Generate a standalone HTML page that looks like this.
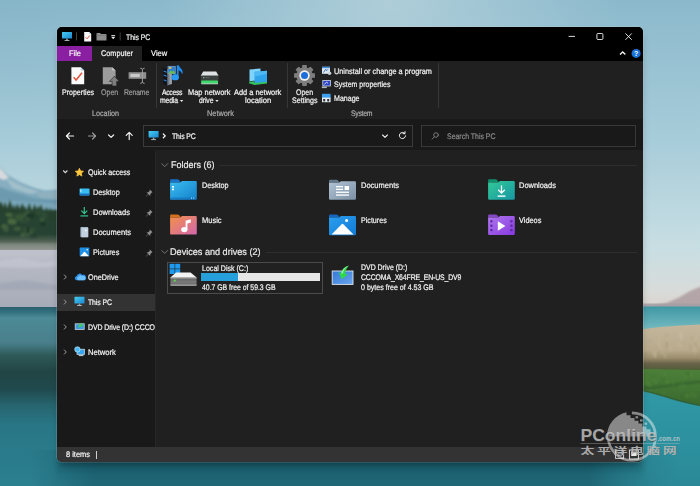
<!DOCTYPE html>
<html lang="en">
<head>
<meta charset="utf-8">
<title>This PC</title>
<style>
*{box-sizing:border-box;margin:0;padding:0}
html,body{width:700px;height:486px;overflow:hidden;background:#8db7c6}
body{position:relative;font-family:"Liberation Sans","Noto Sans CJK SC",sans-serif;color:#fff;font-size:8px;line-height:1}
#bg{position:absolute;left:0;top:0;width:700px;height:486px}
#win{position:absolute;left:57px;top:27px;width:586px;height:435px;border-radius:5px;overflow:hidden;background:#202020;box-shadow:0 5px 9px -3px rgba(0,0,0,.4),0 0 0 .6px rgba(205,220,226,.4)}
.abs{position:absolute}
.t{position:absolute;display:block;white-space:nowrap;line-height:10px;height:10px;transform-origin:0 50%;color:#f6f6f6;-webkit-text-stroke:.2px currentColor;text-rendering:geometricPrecision}
#titlebar{left:0;top:0;width:586px;height:34px;background:#000}
#tab-file{left:0;top:19px;width:35px;height:15px;background:#8b1fa2}
#tab-computer{left:35px;top:19px;width:50px;height:15px;background:#202020}
#ribbon{left:0;top:34px;width:586px;height:58px;background:#202020}
.vsep{position:absolute;width:1px;top:36px;height:45px;background:#373737}
#addr{left:0;top:92px;width:586px;height:31px;background:#191919}
#addrbox{left:86px;top:98px;width:270px;height:21.5px;border:1px solid #3b3b3b;background:#191919}
#searchbox{left:364px;top:98px;width:215px;height:21.5px;border:1px solid #383838;background:#191919}
#nav{left:0;top:123px;width:98px;height:297px;background:#191919;overflow:hidden}
#navsel{left:0;top:143.5px;width:98px;height:17px;background:#333}
#content{left:98px;top:126px;width:488px;height:294px;background:#202020;border-left:1px solid #272727}
.hline{position:absolute;height:1px;background:#2e2e2e}
#tile-c{left:109.5px;top:234.5px;width:156.5px;height:32px;border:1px solid #4b4b4b;background:#212121}
#bar{left:144.4px;top:246px;width:118.4px;height:8.2px;background:#e6e6e6}
#barfill{left:0;top:0;width:36.6px;height:8.2px;background:#26a0da}
#status{left:0;top:420px;width:586px;height:15px;background:#333}
#icons{position:absolute;left:0;top:0;width:586px;height:435px}
.t.g{color:#adadad}
.t.dis{color:#9c9c9c}
.t.sg{color:#8c8c8c}
.t.h{color:#ececec}
#wm{position:absolute;left:0;top:0;width:700px;height:486px;pointer-events:none}
</style>
</head>
<body>
<svg id="bg" viewBox="0 0 700 486">
<defs>
<linearGradient id="sky" x1="0" y1="0" x2="0" y2="1">
<stop offset="0" stop-color="#8bb9cc"/><stop offset="0.45" stop-color="#a7ccd9"/><stop offset="0.8" stop-color="#c8dee3"/><stop offset="0.93" stop-color="#d7dcda"/><stop offset="1" stop-color="#ddd3cd"/>
</linearGradient>
<radialGradient id="skyglow" cx="390" cy="-10" r="230" gradientUnits="userSpaceOnUse">
<stop offset="0" stop-color="#b3d0da" stop-opacity=".9"/><stop offset="1" stop-color="#b3d0da" stop-opacity="0"/>
</radialGradient>
<radialGradient id="lskyh" cx="0" cy="0" r="150" gradientUnits="userSpaceOnUse">
<stop offset="0" stop-color="#7eaec1" stop-opacity=".3"/><stop offset="1" stop-color="#7eaec1" stop-opacity="0"/>
</radialGradient>
<linearGradient id="mtn" x1="0" y1="0" x2="0" y2="1">
<stop offset="0" stop-color="#c3d3da"/><stop offset="0.3" stop-color="#8ab1c2"/><stop offset="1" stop-color="#76a3b7"/>
</linearGradient>
<linearGradient id="mist" x1="0" y1="0" x2="0" y2="1">
<stop offset="0" stop-color="#5f6f60" stop-opacity="0"/><stop offset="0.6" stop-color="#777f74" stop-opacity=".9"/><stop offset="1" stop-color="#9a9d9a"/>
</linearGradient>
<linearGradient id="snow" x1="0" y1="0" x2="0" y2="1">
<stop offset="0" stop-color="#c0c3cd"/><stop offset="0.3" stop-color="#b4b8c3"/><stop offset="1" stop-color="#a6abb8"/>
</linearGradient>
<linearGradient id="lwater" x1="0" y1="0" x2="0" y2="1">
<stop offset="0" stop-color="#2a5e6d"/><stop offset="0.03" stop-color="#35717f"/><stop offset="0.06" stop-color="#4c8b97"/><stop offset="0.2" stop-color="#497f8b"/><stop offset="0.27" stop-color="#2e5a58"/><stop offset="0.36" stop-color="#214544"/><stop offset="0.46" stop-color="#204a4e"/><stop offset="0.55" stop-color="#27656f"/><stop offset="0.66" stop-color="#287686"/><stop offset="1" stop-color="#2b8090"/>
</linearGradient>
<linearGradient id="rwater" x1="0" y1="0" x2="0" y2="1">
<stop offset="0" stop-color="#3f98a5"/><stop offset="1" stop-color="#78bcc1"/>
</linearGradient>
<linearGradient id="dry" x1="0" y1="0" x2="0" y2="1">
<stop offset="0" stop-color="#c3b69c"/><stop offset="0.55" stop-color="#b9aa8c"/><stop offset="0.72" stop-color="#9b8d6d"/><stop offset="0.84" stop-color="#6a6349"/><stop offset="1" stop-color="#4c5c36"/>
</linearGradient>
<linearGradient id="green" x1="0" y1="0" x2="0" y2="1">
<stop offset="0" stop-color="#4c8039"/><stop offset="0.5" stop-color="#437534"/><stop offset="1" stop-color="#3a692f"/>
</linearGradient>
<linearGradient id="rbwater" x1="0" y1="0" x2="0" y2="1">
<stop offset="0" stop-color="#2f98a6"/><stop offset="0.5" stop-color="#2d919f"/><stop offset="1" stop-color="#2b8997"/>
</linearGradient>
<linearGradient id="bwater" x1="0" y1="0" x2="1" y2="0">
<stop offset="0" stop-color="#1f6676" stop-opacity="0"/><stop offset="0.1" stop-color="#1f6676" stop-opacity="1"/><stop offset="0.86" stop-color="#1f6676" stop-opacity="1"/><stop offset="1" stop-color="#2a7c8b" stop-opacity="0"/>
</linearGradient>
<linearGradient id="bshade" x1="0" y1="0" x2="0" y2="1">
<stop offset="0" stop-color="#0d3a46" stop-opacity=".3"/><stop offset="1" stop-color="#0d3a46" stop-opacity="0"/>
</linearGradient>
<filter id="b1" x="-20%" y="-20%" width="140%" height="140%"><feGaussianBlur stdDeviation=".8"/></filter>
<filter id="b2" x="-20%" y="-20%" width="140%" height="140%"><feGaussianBlur stdDeviation="2"/></filter>
</defs>
<rect width="700" height="310" fill="url(#sky)"/>
<rect width="700" height="240" fill="url(#skyglow)"/>
<rect width="160" height="160" fill="url(#lskyh)"/>
<!-- left landscape -->
<g id="left-land">
<path d="M-10 160L0 167L8 175L20 182L35 188L45 190.5L70 189L70 216L-10 216Z" fill="url(#mtn)" filter="url(#b1)"/>
<path d="M-6 166L2 170L9 178L4 180L-6 176Z" fill="#d6dadf" filter="url(#b1)"/>
<path d="M6 178L22 186L40 192L30 194L12 188Z" fill="#a9c4ce" opacity=".8" filter="url(#b1)"/>
<path d="M-4 186L14 192L34 198L60 200L60 204L-4 200Z" fill="#6896ab" opacity=".8" filter="url(#b1)"/>
<path d="M36 192L58 191L58 199L40 198Z" fill="#96b3bf" opacity=".7" filter="url(#b1)"/>
<g filter="url(#b1)">
<rect x="-10" y="210" width="80" height="34" fill="#284330"/>
<path d="M-2.4 198.4L1.8 209.4L-6.5 209.4Z" fill="#27432f"/><path d="M1.1 200.8L4.9 211.8L-2.6 211.8Z" fill="#27432f"/><path d="M5.1 201.3L8.4 212.3L1.9 212.3Z" fill="#27432f"/><path d="M9.9 199.7L13.2 210.7L6.5 210.7Z" fill="#27432f"/><path d="M13.8 204.1L17.2 215.1L10.5 215.1Z" fill="#27432f"/><path d="M17.4 203.6L22 214.6L12.9 214.6Z" fill="#27432f"/><path d="M22.2 203.1L26.7 214.1L17.6 214.1Z" fill="#27432f"/><path d="M25.1 205.8L28.7 216.8L21.5 216.8Z" fill="#27432f"/><path d="M29.3 202.7L32.9 213.7L25.7 213.7Z" fill="#27432f"/><path d="M34.6 203.8L38.6 214.8L30.6 214.8Z" fill="#27432f"/><path d="M38.3 205.2L42.2 216.2L34.3 216.2Z" fill="#27432f"/><path d="M41.1 204.1L44.6 215.1L37.6 215.1Z" fill="#27432f"/><path d="M46.4 206.6L50 217.6L42.7 217.6Z" fill="#27432f"/><path d="M50.2 207.3L53.8 218.3L46.6 218.3Z" fill="#27432f"/><path d="M54.6 209.2L58.1 220.2L51 220.2Z" fill="#27432f"/><path d="M58.1 208.8L62.6 219.8L53.7 219.8Z" fill="#27432f"/>
<ellipse cx="42.3" cy="219.5" rx="2.3" ry="2.3" fill="#3d5c3c"/><ellipse cx="43.9" cy="216" rx="3.1" ry="3.4" fill="#2f4c35"/><ellipse cx="4.5" cy="226.5" rx="2.9" ry="2.2" fill="#48683f"/><ellipse cx="28.8" cy="232.7" rx="4.1" ry="3.4" fill="#3d5c3c"/><ellipse cx="27.5" cy="229.3" rx="3.8" ry="2.1" fill="#3d5c3c"/><ellipse cx="33.5" cy="229.7" rx="2.7" ry="2.3" fill="#2f4c35"/><ellipse cx="38.8" cy="212.6" rx="2.9" ry="2.7" fill="#2f4c35"/><ellipse cx="28.6" cy="217.7" rx="2.3" ry="2" fill="#48683f"/><ellipse cx="22.7" cy="234.7" rx="2.4" ry="2.3" fill="#3d5c3c"/><ellipse cx="16.1" cy="215.6" rx="4.2" ry="2.1" fill="#2f4c35"/><ellipse cx="24.1" cy="221.3" rx="4.4" ry="1.8" fill="#2f4c35"/><ellipse cx="10.2" cy="218" rx="2" ry="3.2" fill="#355435"/><ellipse cx="10.6" cy="219.3" rx="3" ry="2.2" fill="#355435"/><ellipse cx="32.8" cy="236.8" rx="4.4" ry="2.8" fill="#1f3829"/><ellipse cx="42.9" cy="223.9" rx="3" ry="2.3" fill="#1f3829"/><ellipse cx="6" cy="228.5" rx="2.5" ry="3.5" fill="#3d5c3c"/><ellipse cx="25.6" cy="214.9" rx="2.1" ry="1.5" fill="#1f3829"/><ellipse cx="8.8" cy="214.6" rx="3.5" ry="1.6" fill="#48683f"/><ellipse cx="12.1" cy="221.8" rx="4.4" ry="2.7" fill="#48683f"/><ellipse cx="27.5" cy="215" rx="4.5" ry="2.4" fill="#2f4c35"/><ellipse cx="28.1" cy="214.2" rx="3.9" ry="3" fill="#3d5c3c"/><ellipse cx="27.8" cy="230" rx="2.1" ry="3.4" fill="#1f3829"/><ellipse cx="30.6" cy="215.8" rx="4.3" ry="3" fill="#1f3829"/><ellipse cx="17.3" cy="228.7" rx="3.7" ry="2" fill="#3d5c3c"/><ellipse cx="21.3" cy="216.3" rx="3.3" ry="3.1" fill="#355435"/><ellipse cx="19.1" cy="217.8" rx="4" ry="3.1" fill="#355435"/>
</g>
<rect x="-10" y="234" width="80" height="18" fill="url(#mist)"/>
<rect x="-10" y="250" width="80" height="59" fill="url(#snow)"/>
<path d="M-5 262L20 258L44 263L62 259L62 266L30 268L-5 267Z" fill="#c4c7d0" opacity=".7" filter="url(#b1)"/>
<path d="M-5 284L24 280L62 286L62 290L-5 290Z" fill="#9da3b1" opacity=".6" filter="url(#b1)"/>
<rect x="0" y="307" width="350" height="179" fill="url(#lwater)"/>
</g>
<!-- right landscape -->
<g id="right-land">
<rect x="350" y="400" width="350" height="86" fill="url(#rbwater)"/>
<path d="M636 306.5L654 305.5L666 303L678 298L690 291L704 285L704 310L636 310Z" fill="#b4a6a8" filter="url(#b1)"/>
<rect x="640" y="303.5" width="60" height="4" fill="#a39fa5" opacity=".85"/>
<rect x="640" y="306.5" width="60" height="24" fill="url(#rwater)"/>
<path d="M640 329.5L660 327L680 325.5L700 324.5L700 371L640 370Z" fill="url(#dry)"/>
<path d="M640 369L700 370L700 406Q680 402 665 397Q650 392.5 640 390.5Z" fill="url(#green)"/>
<path d="M640 390.5Q650 392.5 665 397Q680 402 700 406L700 486L640 486Z" fill="url(#rbwater)"/>
<path d="M640 388.5Q655 388 670 385.5Q686 383 702 381.5" fill="none" stroke="#27502a" stroke-width="2.2" opacity=".55" filter="url(#b1)"/>
<g id="grass-tex" filter="url(#b1)"><path d="M656.6 344.1l0.2 4.5" stroke="#9d8f70" stroke-width="1" opacity=".55"/><path d="M646.7 330.3l0.1 6.3" stroke="#cdbf9f" stroke-width="1" opacity=".55"/><path d="M653.9 348.6l-0.2 5.2" stroke="#9d8f70" stroke-width="1" opacity=".55"/><path d="M692.1 336l0.4 3.6" stroke="#9d8f70" stroke-width="1" opacity=".55"/><path d="M681.3 331.7l-0.3 6" stroke="#d3c8b0" stroke-width="1" opacity=".55"/><path d="M644.8 352.5l0.3 4.9" stroke="#9d8f70" stroke-width="1" opacity=".55"/><path d="M695.5 340.3l0.7 6.2" stroke="#9d8f70" stroke-width="1" opacity=".55"/><path d="M650.6 339.5l-0.5 3.1" stroke="#9d8f70" stroke-width="1" opacity=".55"/><path d="M698 341.3l-0.1 5.5" stroke="#cdbf9f" stroke-width="1" opacity=".55"/><path d="M690.5 344.9l0.1 5.1" stroke="#9d8f70" stroke-width="1" opacity=".55"/><path d="M694.5 347.7l0.8 6.7" stroke="#cdbf9f" stroke-width="1" opacity=".55"/><path d="M681.3 334.2l0.3 6.4" stroke="#d3c8b0" stroke-width="1" opacity=".55"/><path d="M655 351.6l-0.6 5.3" stroke="#cdbf9f" stroke-width="1" opacity=".55"/><path d="M670.5 346.6l0.5 4.9" stroke="#cdbf9f" stroke-width="1" opacity=".55"/><path d="M666.4 333.9l0.6 4.2" stroke="#9d8f70" stroke-width="1" opacity=".55"/><path d="M645.5 346l0.1 3.2" stroke="#cdbf9f" stroke-width="1" opacity=".55"/><path d="M695.5 337.3l-0.3 3.9" stroke="#d3c8b0" stroke-width="1" opacity=".55"/><path d="M647.4 345.6l0.8 3.1" stroke="#a89a7c" stroke-width="1" opacity=".55"/><path d="M659.6 336.8l-0.3 5.8" stroke="#cdbf9f" stroke-width="1" opacity=".55"/><path d="M697.6 353.3l0.6 4.5" stroke="#9d8f70" stroke-width="1" opacity=".55"/><path d="M665 352.5l0.2 5.7" stroke="#d3c8b0" stroke-width="1" opacity=".55"/><path d="M696.6 343.2l0.7 4.7" stroke="#a89a7c" stroke-width="1" opacity=".55"/><path d="M667.9 336.7l-0.8 4.2" stroke="#cdbf9f" stroke-width="1" opacity=".55"/><path d="M666.7 345.1l-0.7 3.1" stroke="#a89a7c" stroke-width="1" opacity=".55"/><path d="M678.8 342.1l0.2 5.7" stroke="#cdbf9f" stroke-width="1" opacity=".55"/><path d="M658.9 342.7l0.7 5.4" stroke="#d3c8b0" stroke-width="1" opacity=".55"/><path d="M657.3 341.9l-0.5 5.4" stroke="#cdbf9f" stroke-width="1" opacity=".55"/><path d="M653.6 349.7l-0.3 6.4" stroke="#cdbf9f" stroke-width="1" opacity=".55"/><path d="M664.5 350.1l-0.3 3.1" stroke="#a89a7c" stroke-width="1" opacity=".55"/><path d="M655.7 350.9l0.3 4" stroke="#a89a7c" stroke-width="1" opacity=".55"/><path d="M680 332.5l0.3 5.4" stroke="#cdbf9f" stroke-width="1" opacity=".55"/><path d="M655.8 351.1l-0.3 6.8" stroke="#d3c8b0" stroke-width="1" opacity=".55"/><path d="M680.1 353l0.5 4.8" stroke="#a89a7c" stroke-width="1" opacity=".55"/><path d="M644.9 354.9l0.6 4.3" stroke="#a89a7c" stroke-width="1" opacity=".55"/><path d="M662.4 351.5l0.1 3.3" stroke="#cdbf9f" stroke-width="1" opacity=".55"/><path d="M667 343.5l-0.2 6.4" stroke="#9d8f70" stroke-width="1" opacity=".55"/><path d="M666.8 340.9l-0.6 4.6" stroke="#9d8f70" stroke-width="1" opacity=".55"/><path d="M643.3 354.5l0.1 6.5" stroke="#9d8f70" stroke-width="1" opacity=".55"/><path d="M699.2 348.6l0.5 3.1" stroke="#9d8f70" stroke-width="1" opacity=".55"/><path d="M680.8 343.5l0.6 4.2" stroke="#cdbf9f" stroke-width="1" opacity=".55"/><path d="M692.1 392.4l0.4 4.9" stroke="#5f9646" stroke-width="1" opacity=".5"/><path d="M695.7 393.4l-0.6 4.7" stroke="#5f9646" stroke-width="1" opacity=".5"/><path d="M685.5 375.3l0 3.2" stroke="#5f9646" stroke-width="1" opacity=".5"/><path d="M662.5 377.3l0.4 4.7" stroke="#2f5a28" stroke-width="1" opacity=".5"/><path d="M646.5 376.5l-0.4 2.8" stroke="#5f9646" stroke-width="1" opacity=".5"/><path d="M688.1 394l-0 4.5" stroke="#5f9646" stroke-width="1" opacity=".5"/><path d="M675.5 381l-0.3 4.4" stroke="#3c6a2e" stroke-width="1" opacity=".5"/><path d="M673.1 381.6l0.4 3.7" stroke="#5f9646" stroke-width="1" opacity=".5"/><path d="M687.2 372.2l0.6 2.6" stroke="#2f5a28" stroke-width="1" opacity=".5"/><path d="M691.7 373.2l-0.4 3.8" stroke="#6aa04c" stroke-width="1" opacity=".5"/><path d="M647.1 380.6l-0.2 3.5" stroke="#6aa04c" stroke-width="1" opacity=".5"/><path d="M653.9 379.2l0.3 2.8" stroke="#5f9646" stroke-width="1" opacity=".5"/><path d="M664.7 373l-0 2.9" stroke="#6aa04c" stroke-width="1" opacity=".5"/><path d="M680.1 384.5l0.1 4.1" stroke="#5f9646" stroke-width="1" opacity=".5"/><path d="M667.6 380.3l-0.1 3.7" stroke="#6aa04c" stroke-width="1" opacity=".5"/><path d="M682.6 382.5l0.2 3.1" stroke="#6aa04c" stroke-width="1" opacity=".5"/><path d="M647.1 381.6l0.5 3.6" stroke="#5f9646" stroke-width="1" opacity=".5"/><path d="M657.9 382.6l0.2 2.8" stroke="#2f5a28" stroke-width="1" opacity=".5"/><path d="M684.8 385.1l-0 2.8" stroke="#5f9646" stroke-width="1" opacity=".5"/><path d="M656.5 380.7l0.2 3.8" stroke="#5f9646" stroke-width="1" opacity=".5"/><path d="M664.4 391.5l-0.6 3.4" stroke="#5f9646" stroke-width="1" opacity=".5"/><path d="M649.6 383l0.1 4.2" stroke="#6aa04c" stroke-width="1" opacity=".5"/><path d="M688.5 371.9l-0.5 4.4" stroke="#3c6a2e" stroke-width="1" opacity=".5"/><path d="M685.7 394.4l0.4 2.7" stroke="#6aa04c" stroke-width="1" opacity=".5"/><path d="M653.3 372.9l-0.1 5" stroke="#3c6a2e" stroke-width="1" opacity=".5"/><path d="M682.9 394.6l0.5 3.1" stroke="#2f5a28" stroke-width="1" opacity=".5"/><path d="M674.7 395.2l0.6 3.4" stroke="#3c6a2e" stroke-width="1" opacity=".5"/></g>
<path d="M640 390Q650 392 665 396.5Q680 401.5 700 405.5" fill="none" stroke="#2c5a35" stroke-width="1.5" opacity=".7"/>
</g>
<!-- bottom water -->
<rect x="30" y="450" width="650" height="36" fill="url(#bwater)"/>
<rect x="57" y="460" width="586" height="20" fill="url(#bshade)" filter="url(#b2)"/>
</svg>
<div id="win">
  <div id="titlebar" class="abs"></div>
  <div id="tab-file" class="abs"></div>
  <div id="tab-computer" class="abs"></div>
  <div id="ribbon" class="abs"></div>
  <div class="vsep" style="left:98.5px"></div>
  <div class="vsep" style="left:230px"></div>
  <div class="vsep" style="left:380.5px"></div>
  <div id="addr" class="abs"></div>
  <div id="addrbox" class="abs"></div>
  <div id="searchbox" class="abs"></div>
  <div id="nav" class="abs"><div id="navsel" class="abs"></div></div>
  <div id="content" class="abs"></div>
  <div class="hline" style="left:162px;top:137.5px;width:418px"></div>
  <div class="hline" style="left:209px;top:224.5px;width:371px"></div>
  <div id="tile-c" class="abs"></div>
  <div id="bar" class="abs"><div id="barfill" class="abs"></div></div>
  <div id="status" class="abs"></div>
  <div class="abs" style="left:39px;top:423.5px;width:1px;height:8px;background:#d0d0d0"></div>
  <svg id="icons" viewBox="57 27 586 435">
<defs>
<linearGradient id="gMon" x1="0" y1="0" x2="1" y2="1"><stop offset="0" stop-color="#45cdf3"/><stop offset="1" stop-color="#1a86cf"/></linearGradient>
<linearGradient id="gDesk" x1="0" y1="0" x2="1" y2="1"><stop offset="0" stop-color="#3bbdf0"/><stop offset="1" stop-color="#1380cb"/></linearGradient>
<linearGradient id="gDocs" x1="0" y1="0" x2="1" y2="1"><stop offset="0" stop-color="#b2c4d4"/><stop offset="1" stop-color="#7b90a6"/></linearGradient>
<linearGradient id="gDown" x1="0" y1="0" x2="1" y2="1"><stop offset="0" stop-color="#33c997"/><stop offset="1" stop-color="#1797a4"/></linearGradient>
<linearGradient id="gMusic" x1="0" y1="0" x2="1" y2="1"><stop offset="0" stop-color="#f4904a"/><stop offset="1" stop-color="#d266ad"/></linearGradient>
<linearGradient id="gPics" x1="0" y1="0" x2="1" y2="1"><stop offset="0" stop-color="#2a9ff0"/><stop offset="1" stop-color="#127ad4"/></linearGradient>
<linearGradient id="gVid" x1="0" y1="0" x2="1" y2="1"><stop offset="0" stop-color="#b077ee"/><stop offset="1" stop-color="#8639de"/></linearGradient>
<linearGradient id="gDrive" x1="0" y1="0" x2="0" y2="1"><stop offset="0" stop-color="#5d5d5d"/><stop offset="0.55" stop-color="#7b7b7b"/><stop offset="1" stop-color="#676767"/></linearGradient>
<linearGradient id="gDvd" x1="0" y1="0" x2="1" y2="1"><stop offset="0" stop-color="#3478d6"/><stop offset="1" stop-color="#6aa5ee"/></linearGradient>
<linearGradient id="gTower" x1="0" y1="0" x2="1" y2="0"><stop offset="0" stop-color="#5b6470"/><stop offset="1" stop-color="#b4bac2"/></linearGradient>
</defs>
<!-- ===== title bar icons ===== -->
<g id="ic-title">
  <rect x="62" y="32" width="10" height="6.6" rx=".6" fill="url(#gMon)"/>
  <rect x="66.2" y="38.6" width="1.6" height="1.6" fill="#8fa3ad"/>
  <rect x="64.6" y="40" width="4.8" height=".9" fill="#b7c4ca"/>
  <rect x="76.1" y="32.5" width=".9" height="8" fill="#4d4a3a"/>
  <path d="M84.2 32h5l2 2v7.5h-7z" fill="#fbfbfb"/>
  <path d="M89.2 32l2 2h-2z" fill="#b9d3ea"/>
  <path d="M85.6 37.3l1.4 1.5 2.9-3.4" fill="none" stroke="#e2553a" stroke-width="1"/>
  <path d="M96.5 33.6q0-.6.6-.6h3l1 1h4.8q.6 0 .6.6v5.3q0 .6-.6.6h-8.8q-.6 0-.6-.6z" fill="#8d8d8d"/>
  <rect x="96.5" y="35" width="10" height=".5" fill="#6f6f6f"/>
  <rect x="111.3" y="35" width="3.8" height=".9" fill="#e6e6e6"/>
  <path d="M111.1 36.7h4.2l-2.1 2.6z" fill="#e6e6e6"/>
  <rect x="119.7" y="32.5" width=".9" height="8" fill="#454545"/>
</g>
<!-- window buttons -->
<g id="ic-winbtn" stroke="#f2f2f2" stroke-width=".9" fill="none">
  <path d="M568.6 36.4h6.4"/>
  <rect x="596.9" y="33.5" width="6" height="6" rx="1"/>
  <path d="M625.4 33.4l6.4 6.4M631.8 33.4l-6.4 6.4"/>
  <path d="M620 54.4l2.7-2.5 2.7 2.5" stroke-width="1.3"/>
</g>
<circle cx="636.1" cy="53.4" r="4.5" fill="#1a73d9"/>
<text x="636.1" y="56" text-anchor="middle" font-family="'Liberation Sans',sans-serif" font-weight="bold" font-size="7" fill="#fff">?</text>
<!-- ===== ribbon icons ===== -->
<g id="ic-props">
  <path d="M71.4 67.2h9.4l3.4 3.4v13.7h-12.8z" fill="#fbfbfb"/>
  <path d="M80.8 67.2l3.4 3.4h-3.4z" fill="#b5d0e8"/>
  <path d="M73.6 77.3l2.5 2.7 5.9-7.2" fill="none" stroke="#e2553a" stroke-width="1.5"/>
</g>
<g id="ic-open">
  <path d="M102.8 67.2h9.4l3.4 3.4v13.7h-12.8z" fill="#9c9c9c"/>
  <path d="M112.2 67.2l3.4 3.4h-3.4z" fill="#c4c4c4"/>
  <path d="M114.4 76.2l5 5.2h-2.7v4.6h-4.6v-4.6h-2.7z" fill="#7d7d7d" stroke="#202020" stroke-width=".6"/>
</g>
<g id="ic-rename">
  <rect x="128.6" y="72.2" width="17.6" height="6.6" fill="#8e8e8e"/>
  <rect x="130.4" y="73.9" width="9.4" height="3.2" fill="#c9c9c9"/>
  <path d="M140.2 68.2q2 0 2.2 1.4q.2-1.4 2.2-1.4M142.4 69.4v12.8M140.2 83.4q2 0 2.2-1.4q.2 1.4 2.2 1.4" fill="none" stroke="#a6a6a6" stroke-width=".9"/>
</g>
<g id="ic-media">
  <path d="M163 67.6l5.4-2.4 3.4 1.2v17.6l-4.6 1.6-4.2-2.2z" fill="#1b2230"/>
  <path d="M163 67.6l4.2 1.6v16.4l-4.2-2.2z" fill="#0f141d"/>
  <path d="M167.2 69.2l4.6-2.8v17.6l-4.6 1.6z" fill="url(#gTower)"/>
  <path d="M163.6 70.4l3 1v1.4l-3-1zM163.6 74.4l3 1v1.4l-3-1zM163.6 79.4l3 .8v1.2l-3-.8z" fill="#2e7fd0"/>
  <rect x="168" y="66.2" width="7.4" height="7.6" fill="#2b7fd6" stroke="#9fb4c6" stroke-width=".5"/>
  <path d="M168.3 73.5l2.4-3.2 1.6 1.6 1.4-1.8 1.6 3.4z" fill="#6bbf4a"/>
  <rect x="169" y="67" width="2.4" height="1.8" fill="#f0c23c"/>
  <path d="M176.8 65.2l1.8 0q1 2.4 3.2 4.2q1.6 1.8.2 5q-.2-3-3.4-4.2v6.8a3.4 2.8 0 1 1-1.8-2.5z" fill="#1f8df0"/>
  <ellipse cx="175.2" cy="77.4" rx="3.7" ry="2.9" fill="#2a9af5"/>
</g>
<g id="ic-mapdrive">
  <path d="M203.2 71.4h13l2 3.8h-17.2z" fill="#dfe2e4"/>
  <rect x="200.8" y="75" width="17.6" height="9.2" rx="1" fill="#3a403d"/>
  <rect x="200.8" y="75" width="17.6" height=".8" fill="#a5abaf"/>
  <rect x="203" y="77.2" width="1.4" height="1" fill="#9fb0a6"/><rect x="205.4" y="77.2" width="4" height="1" fill="#59635d"/>
  <rect x="201.2" y="80.4" width="16.8" height="3" rx=".6" fill="#3fd96c"/>
  <rect x="201.2" y="83.4" width="16.8" height=".8" fill="#d5f5df"/>
</g>
<g id="ic-addnet">
  <path d="M249.5 69.5l11-1v11.5l-11 1.2z" fill="#7fd4fb"/>
  <path d="M254.5 71.8l12.5-1v12l-12.5 1.4z" fill="#2fa4ea"/>
  <path d="M254.5 71.8l12.5-1v3l-12.5 3z" fill="#55bdf5" opacity=".8"/>
  <path d="M249 81.8l5.5-.6v1.8l12.5-1.2v1.6l-12.5 1.6-5.5-1.7z" fill="#34c25e"/>
</g>
<g id="ic-gear">
  <path id="gearp" fill="#7e7e7e" stroke="#7e7e7e" stroke-width="1.2" stroke-linejoin="round" d="M314.35 73.78L314.35 77.22L311.89 77.27L310.98 79.47L312.68 81.25L310.25 83.68L308.47 81.98L306.27 82.89L306.22 85.35L302.78 85.35L302.73 82.89L300.53 81.98L298.75 83.68L296.32 81.25L298.02 79.47L297.11 77.27L294.65 77.22L294.65 73.78L297.11 73.73L298.02 71.53L296.32 69.75L298.75 67.32L300.53 69.02L302.73 68.11L302.78 65.65L306.22 65.65L306.27 68.11L308.47 69.02L310.25 67.32L312.68 69.75L310.98 71.53L311.89 73.73Z"/>
  <circle cx="304.5" cy="75.5" r="5.2" fill="#f1f1f1"/>
  <circle cx="304.5" cy="75.5" r="3.5" fill="#1c6fd8"/>
</g>
<g id="ic-small">
  <rect x="322" y="66.8" width="8" height="7" fill="#dfe9f2"/>
  <rect x="322" y="66.8" width="8" height="1.4" fill="#3d8fe0"/>
  <path d="M323.5 72.5l2-3 1.5 1 1-1.2" stroke="#2a62b5" stroke-width=".9" fill="none"/>
  <circle cx="329.5" cy="73.2" r="1.8" fill="#c9d3dc"/>
  <rect x="322.8" y="80.4" width="7.8" height="5.6" fill="#2d43c8" stroke="#cfd8e2" stroke-width=".8"/>
  <path d="M324.3 84.5l2.2-2.4 1.6 1.2" stroke="#fff" stroke-width=".8" fill="none"/>
  <rect x="321.8" y="86.6" width="5" height="1.5" fill="#aeb8c2"/>
  <rect x="322" y="93.8" width="8.6" height="4.4" fill="#3ba0ef"/>
  <rect x="322" y="97.6" width="8.6" height="4.6" fill="#e8edf1"/>
  <rect x="323.2" y="99" width="2" height="2.4" fill="#2a2f36"/>
  <rect x="327.2" y="99" width="2" height="2.4" fill="#2a2f36"/>
</g>
<!-- ribbon dropdown arrows -->
<path d="M179.9 100l3.4 0-1.7 1.9z" fill="#e6e6e6"/>
<path d="M215.3 100l3.4 0-1.7 1.9z" fill="#e6e6e6"/>
<!-- ===== address row ===== -->
<g id="ic-addr" fill="none" stroke="#f2f2f2" stroke-width="1.2" stroke-linecap="round" stroke-linejoin="round">
  <path d="M73.6 136h-7.2M69.4 133l-3 3 3 3"/>
  <path d="M88.4 136h7.2M92.6 133l3 3-3 3" stroke="#9b9b9b"/>
  <path d="M108.6 135l2.5 2.4 2.5-2.4" stroke-width="1.2"/>
  <path d="M129.2 139.6v-7.2M126.2 135.4l3-3 3 3"/>
  <path d="M163.3 134l2 1.9-2 1.9" stroke-width="1.2" stroke="#fff"/>
  <path d="M382.6 135l2.4 2.3 2.4-2.3" stroke-width="1.1"/>
  <path d="M404.8 133.4a3.1 3.1 0 1 0 .8 2.4M405 131.6v2.1h-2.1" stroke-width="1"/>
  <circle cx="436" cy="135" r="2.3" stroke="#8a8a8a" stroke-width=".8"/>
  <path d="M434.3 136.8l-2.2 2.3" stroke="#8a8a8a" stroke-width=".8"/>
</g>
<rect x="148.6" y="131" width="10" height="6.6" rx=".6" fill="url(#gMon)"/>
<rect x="152.8" y="137.6" width="1.6" height="1.7" fill="#8fa3ad"/>
<rect x="151.2" y="139.2" width="4.8" height=".9" fill="#b7c4ca"/>
<!-- ===== nav pane icons ===== -->
<g id="ic-nav">
  <path d="M63.2 170.5l2.1 2.1 2.1-2.1" fill="none" stroke="#dcdcdc" stroke-width="1.1"/>
  <path id="starp" stroke="#ffc83d" stroke-width=".8" stroke-linejoin="round" d="M79.4 168.3L80.58 170.98L83.49 171.27L81.3 173.22L81.93 176.08L79.4 174.6L76.87 176.08L77.5 173.22L75.31 171.27L78.22 170.98Z" fill="#ffc83d"/>
  <g fill="none" stroke="#9a9a9a" stroke-width="1">
    <path d="M64 274.6l2.3 2.4-2.3 2.4"/>
    <path d="M64 299.6l2.3 2.4-2.3 2.4"/>
    <path d="M64 324.6l2.3 2.4-2.3 2.4"/>
    <path d="M64 349.6l2.3 2.4-2.3 2.4"/>
  </g>
  <!-- desktop -->
  <rect x="79.6" y="188.4" width="9.9" height="7" rx=".8" fill="#38bdf2"/>
  <rect x="79.6" y="193.6" width="9.9" height="1.8" fill="#1a6fc0"/>
  <rect x="80.4" y="189.4" width="1" height="2.8" fill="#d8f3ff"/>
  <!-- downloads -->
  <path d="M84.3 207v6.3M81.3 210.6l3 3 3-3" fill="none" stroke="#2fc48f" stroke-width="1.2"/>
  <rect x="80.4" y="215.3" width="7.8" height="1.2" fill="#2fc48f"/>
  <!-- documents -->
  <rect x="80.4" y="227" width="7.8" height="10.2" rx=".8" fill="#a7b8ca"/>
  <rect x="81.6" y="228" width="6.6" height="9.2" fill="#c3d0dd"/>
  <rect x="85" y="229.8" width="1.8" height="1.4" fill="#f4f7fa"/>
  <!-- pictures -->
  <rect x="79.7" y="247.4" width="9.6" height="8.9" rx=".8" fill="#1d8fe6"/>
  <path d="M80.2 256.3l4.3-4.9 4.4 4.9z" fill="#fff"/>
  <circle cx="87.2" cy="249.7" r=".8" fill="#fff"/>
  <!-- pins -->
  <g id="pin" fill="#8d8d8d">
    <path d="M149.6 189.2l3 3-.8.4-1.5 1.7-.2 1.6-1.6-1.6-2.2 2.2-.3-.300 2.2-2.2-1.6-1.6 1.6-.2 1.7-1.5z"/>
  </g>
  <use href="#pin" y="20"/><use href="#pin" y="40"/><use href="#pin" y="60"/>
  <!-- onedrive cloud -->
  <path d="M76.4 280.2a2.2 2.2 0 0 1 .3-4.3a3 3 0 0 1 5.4-1a2.6 2.6 0 0 1 2.3 5.3z" fill="#2a8fe8"/>
  <path d="M78.2 280.2a2 2 0 0 1 .2-3.8a2.8 2.8 0 0 1 4.4-.3a2.2 2.2 0 0 1 1.5 4.1z" fill="#6ec0fa"/>
  <!-- this pc -->
  <rect x="74.5" y="296.8" width="10" height="6.8" rx=".6" fill="url(#gMon)"/>
  <rect x="78.7" y="303.6" width="1.6" height="1.6" fill="#8fa3ad"/>
  <rect x="77.1" y="305" width="4.8" height=".9" fill="#b7c4ca"/>
  <!-- dvd nav -->
  <rect x="75.2" y="323.8" width="9" height="5.8" fill="#3f97dd" stroke="#c9d3dc" stroke-width=".8"/>
  <path d="M78.2 327.8l1.3-4.4 1.5.9 1-1.8.7 3.6z" fill="#3fce5a"/>
  <!-- network nav -->
  <rect x="77" y="349.2" width="7.6" height="5.4" fill="#37a6ee" stroke="#d5dde4" stroke-width=".7"/>
  <circle cx="77.4" cy="349.4" r="2.7" fill="#49b8f5" stroke="#d5eefc" stroke-width=".6"/>
  <rect x="78.8" y="355" width="4.6" height="1.1" fill="#b7c4ca"/>
</g>
<!-- ===== content icons ===== -->
<g id="ic-content">
  <path d="M161.5 163.4l3.2 3.2 3.2-3.2" fill="none" stroke="#7d7d7d" stroke-width=".9"/>
  <path d="M161.5 250.2l3.2 3.2 3.2-3.2" fill="none" stroke="#7d7d7d" stroke-width=".9"/>
  <!-- Desktop folder -->
  <g id="f-desktop">
    <path d="M170.1 180.5q0-1.2 1.2-1.2h6.3q.8 0 1.4.6l2 2.5h-10.9z" fill="#1671c9"/>
    <path d="M170.1 182.4h10l2-1.5h13.5q1.2 0 1.2 1.2v16.4q0 1.2-1.2 1.2h-24.3q-1.2 0-1.2-1.2z" fill="url(#gDesk)"/>
    <rect x="172" y="186" width="2" height="1.7" fill="#e9f8ff"/><rect x="172" y="188.6" width="2" height="1.7" fill="#e9f8ff"/><rect x="170.1" y="197.4" width="26.7" height="2.3" rx="1" fill="#0f68b4" opacity=".55"/>
    <rect x="191" y="197.6" width="1" height="1" fill="#d8f0ff"/><rect x="193.2" y="197.6" width="1" height="1" fill="#d8f0ff"/>
  </g>
  <!-- Documents folder -->
  <g id="f-docs">
    <path d="M329 180.9q0-1.2 1.2-1.2h6.3q.8 0 1.4.6l2 2.5h-10.9z" fill="#66798a"/>
    <path d="M329 182.8h10l2-1.5h13.8q1.2 0 1.2 1.2v16q0 1.2-1.2 1.2h-24.6q-1.2 0-1.2-1.2z" fill="url(#gDocs)"/>
    <rect x="336" y="186" width="7" height="1.3" fill="#fff"/><rect x="344.6" y="186" width="4.4" height="4" fill="#fff"/>
    <rect x="336" y="188.7" width="7" height="1.3" fill="#fff"/>
    <rect x="336" y="191.6" width="13" height="1.3" fill="#fff"/><rect x="336" y="194.4" width="13" height="1.3" fill="#fff"/>
  </g>
  <!-- Downloads folder -->
  <g id="f-down">
    <path d="M488.1 180.5q0-1.2 1.2-1.2h6.3q.8 0 1.4.6l2 2.5h-10.9z" fill="#0f8e6d"/>
    <path d="M488.1 182.4h10l2-1.5h13.5q1.2 0 1.2 1.2v16.4q0 1.2-1.2 1.2h-24.3q-1.2 0-1.2-1.2z" fill="url(#gDown)"/>
    <path d="M501.5 185.4v7.6M498.2 189.8l3.3 3.3 3.3-3.3" fill="none" stroke="#fff" stroke-width="1.3"/>
    <rect x="497.6" y="195.4" width="7.8" height="1.4" fill="#fff"/>
  </g>
  <!-- Music folder -->
  <g id="f-music">
    <path d="M170.1 215.7q0-1.2 1.2-1.2h6.3q.8 0 1.4.6l2 2.5h-10.9z" fill="#d6701c"/>
    <path d="M170.1 217.6h10l2-1.5h13.5q1.2 0 1.2 1.2v16.1q0 1.2-1.2 1.2h-24.3q-1.2 0-1.2-1.2z" fill="url(#gMusic)"/>
    <path d="M185.6 229v-8.2l5.2-1.5v3.3l-3.4 1v6.4z" fill="#fff"/>
    <ellipse cx="184.3" cy="229.6" rx="3.1" ry="2.6" fill="#fff"/>
  </g>
  <!-- Pictures folder -->
  <g id="f-pics">
    <path d="M329 215.7q0-1.2 1.2-1.2h6.3q.8 0 1.4.6l2 2.5h-10.9z" fill="#1466c0"/>
    <path d="M329 217.6h10l2-1.5h13.8q1.2 0 1.2 1.2v16.7q0 1.2-1.2 1.2h-24.6q-1.2 0-1.2-1.2z" fill="url(#gPics)"/>
    <path d="M331.5 234.6l10.2-10.4q.8-.7 1.6 0l10.2 10.4z" fill="#fff"/>
    <circle cx="346.6" cy="220.6" r="1.5" fill="#fff"/>
  </g>
  <!-- Videos folder -->
  <g id="f-vid">
    <path d="M488.1 215.7q0-1.2 1.2-1.2h6.3q.8 0 1.4.6l2 2.5h-10.9z" fill="#8348c4"/>
    <path d="M488.1 217.6h10l2-1.5h13.5q1.2 0 1.2 1.2v16.5q0 1.2-1.2 1.2h-24.3q-1.2 0-1.2-1.2z" fill="url(#gVid)"/>
    <g fill="#5b2a9c"><rect x="490.3" y="220.2" width="2.2" height="2.2"/><rect x="490.3" y="224.6" width="2.2" height="2.2"/><rect x="490.3" y="229" width="2.2" height="2.2"/>
    <rect x="510.3" y="220.2" width="2.2" height="2.2"/><rect x="510.3" y="224.6" width="2.2" height="2.2"/><rect x="510.3" y="229" width="2.2" height="2.2"/></g>
    <path d="M497.8 221.2l7.6 4.8-7.6 4.8z" fill="#fff"/>
  </g>
  <!-- Local disk -->
  <g id="d-c">
    <g fill="#1e9bf0"><rect x="169.6" y="263.8" width="5" height="4.8"/><rect x="175.2" y="263.8" width="5" height="4.8"/><rect x="169.6" y="269.2" width="5" height="4.8"/><rect x="175.2" y="269.2" width="5" height="4.8"/></g>
    <path d="M176 272.4h14.6l6 5.2h-26.2z" fill="#f2f2f2"/>
    <rect x="170.4" y="277.4" width="26.2" height="8.2" rx=".8" fill="url(#gDrive)"/>
    <rect x="170.4" y="277.4" width="26.2" height=".9" fill="#d9d9d9"/>
    <rect x="170.4" y="284.7" width="26.2" height=".9" fill="#c8c8c8"/>
    <circle cx="174.8" cy="280.6" r="1.1" fill="#5be04a"/>
  </g>
  <!-- DVD -->
  <g id="d-d">
    <rect x="332.2" y="271" width="20.8" height="13.4" fill="url(#gDvd)" stroke="#dfe6ee" stroke-width=".9"/>
    <path d="M348.8 265.4q-6.5 2-7.6 7.8l-2.6-1 3.2 7 6-4.6-2.7-.5q.4-5 3.7-8.7z" fill="#2fd84a"/>
    <path d="M348.8 265.4q-6.5 2-7.6 7.8l1.5.5q1-5.4 6.1-8.3z" fill="#8ff59a"/>
  </g>
</g>
<!-- ===== status bar view icons ===== -->
<g id="ic-status">
  <rect x="615.6" y="450.4" width="8" height="8" fill="none" stroke="#d8d8d8" stroke-width=".9"/>
  <path d="M617.4 453h4.4M617.4 455.2h4.4" stroke="#d8d8d8" stroke-width=".8"/>
  <rect x="629.4" y="450" width="9" height="9" fill="none" stroke="#e8e8e8" stroke-width=".9"/>
  <rect x="631.2" y="451.6" width="5.4" height="4.4" fill="#e8e8e8"/>
</g>

  </svg>
  <span class="t" style="left:68.6px;top:5.8px;font-size:8.1px;letter-spacing:-0.047px;transform:scaleX(0.85);">This PC</span>
  <span class="t" style="left:11.5px;top:22.2px;font-size:8.1px;letter-spacing:0px;transform:scaleX(0.92);">File</span>
  <span class="t" style="left:44px;top:22.2px;font-size:8.1px;letter-spacing:0px;transform:scaleX(0.9);">Computer</span>
  <span class="t" style="left:94px;top:22.2px;font-size:8.1px;letter-spacing:0px;transform:scaleX(0.931);">View</span>
  <span class="t" style="left:5.2px;top:61.1px;font-size:8.1px;letter-spacing:0px;transform:scaleX(0.87);">Properties</span>
  <span class="t dis" style="left:43.7px;top:61.1px;font-size:8.1px;letter-spacing:0px;transform:scaleX(0.873);">Open</span>
  <span class="t dis" style="left:67.1px;top:61.1px;font-size:8.1px;letter-spacing:-0.177px;transform:scaleX(0.85);">Rename</span>
  <span class="t" style="left:105px;top:61.1px;font-size:8.1px;letter-spacing:-0.388px;transform:scaleX(0.85);">Access</span>
  <span class="t" style="left:103px;top:69.2px;font-size:8.1px;letter-spacing:-0.221px;transform:scaleX(0.85);">media</span>
  <span class="t" style="left:130.5px;top:61.1px;font-size:8.1px;letter-spacing:0px;transform:scaleX(0.917);">Map network</span>
  <span class="t" style="left:141.6px;top:69.2px;font-size:8.1px;letter-spacing:-0.121px;transform:scaleX(0.85);">drive</span>
  <span class="t" style="left:176.7px;top:61.1px;font-size:8.1px;letter-spacing:0px;transform:scaleX(0.914);">Add a network</span>
  <span class="t" style="left:187.5px;top:69.2px;font-size:8.1px;letter-spacing:0px;transform:scaleX(0.942);">location</span>
  <span class="t" style="left:239px;top:61.1px;font-size:8.1px;letter-spacing:0px;transform:scaleX(0.858);">Open</span>
  <span class="t" style="left:234.5px;top:69.2px;font-size:8.1px;letter-spacing:0px;transform:scaleX(0.872);">Settings</span>
  <span class="t" style="left:276.5px;top:39.6px;font-size:8.1px;letter-spacing:0px;transform:scaleX(0.903);">Uninstall or change a program</span>
  <span class="t" style="left:276.5px;top:53.4px;font-size:8.1px;letter-spacing:0px;transform:scaleX(0.866);">System properties</span>
  <span class="t" style="left:276.5px;top:67px;font-size:8.1px;letter-spacing:0px;transform:scaleX(0.872);">Manage</span>
  <span class="t g" style="left:35.2px;top:81.6px;font-size:8.1px;letter-spacing:0px;transform:scaleX(0.885);">Location</span>
  <span class="t g" style="left:149.8px;top:81.6px;font-size:8.1px;letter-spacing:0px;transform:scaleX(0.909);">Network</span>
  <span class="t g" style="left:294px;top:81.6px;font-size:8.1px;letter-spacing:-0.343px;transform:scaleX(0.85);">System</span>
  <span class="t" style="left:115px;top:104.7px;font-size:8.1px;letter-spacing:-0.164px;transform:scaleX(0.85);">This PC</span>
  <span class="t sg" style="left:389.5px;top:104.7px;font-size:8.1px;letter-spacing:0px;transform:scaleX(0.858);">Search This PC</span>
  <span class="t" style="left:30.8px;top:140.8px;font-size:8.1px;letter-spacing:0px;transform:scaleX(0.881);">Quick access</span>
  <span class="t" style="left:35.8px;top:160.8px;font-size:8.1px;letter-spacing:0px;transform:scaleX(0.899);">Desktop</span>
  <span class="t" style="left:35.8px;top:180.8px;font-size:8.1px;letter-spacing:0px;transform:scaleX(0.921);">Downloads</span>
  <span class="t" style="left:35.8px;top:200.8px;font-size:8.1px;letter-spacing:0px;transform:scaleX(0.928);">Documents</span>
  <span class="t" style="left:35.8px;top:220.8px;font-size:8.1px;letter-spacing:0px;transform:scaleX(0.899);">Pictures</span>
  <span class="t" style="left:30.8px;top:245.8px;font-size:8.1px;letter-spacing:0px;transform:scaleX(0.895);">OneDrive</span>
  <span class="t" style="left:30.8px;top:270.9px;font-size:8.1px;letter-spacing:-0.114px;transform:scaleX(0.85);">This PC</span>
  <span class="t" style="left:30.8px;top:295.9px;font-size:8.1px;letter-spacing:-0.12px;width:77.9px;overflow:hidden;transform:scaleX(0.86);">DVD Drive (D:) CCCOMA_X64FRE_EN-US_DV9</span>
  <span class="t" style="left:30.8px;top:320.9px;font-size:8.1px;letter-spacing:0px;transform:scaleX(0.94);">Network</span>
  <span class="t h" style="left:113.6px;top:133.4px;font-size:9.7px;letter-spacing:0px;transform:scaleX(0.926);line-height:12px;height:12px;">Folders (6)</span>
  <span class="t" style="left:145px;top:153.8px;font-size:8.1px;letter-spacing:0px;transform:scaleX(0.896);">Desktop</span>
  <span class="t" style="left:303.7px;top:153.8px;font-size:8.1px;letter-spacing:0px;transform:scaleX(0.928);">Documents</span>
  <span class="t" style="left:462.4px;top:153.8px;font-size:8.1px;letter-spacing:0px;transform:scaleX(0.921);">Downloads</span>
  <span class="t" style="left:145px;top:188.8px;font-size:8.1px;letter-spacing:0px;transform:scaleX(0.927);">Music</span>
  <span class="t" style="left:303.7px;top:188.8px;font-size:8.1px;letter-spacing:0px;transform:scaleX(0.879);">Pictures</span>
  <span class="t" style="left:462.4px;top:188.8px;font-size:8.1px;letter-spacing:0px;transform:scaleX(0.91);">Videos</span>
  <span class="t h" style="left:113.4px;top:220.2px;font-size:9.7px;letter-spacing:0px;transform:scaleX(0.939);line-height:12px;height:12px;">Devices and drives (2)</span>
  <span class="t" style="left:144.8px;top:236.5px;font-size:8.1px;letter-spacing:0px;transform:scaleX(0.872);">Local Disk (C:)</span>
  <span class="t" style="left:144.8px;top:256.2px;font-size:8.1px;letter-spacing:-0.016px;transform:scaleX(0.85);">40.7 GB free of 59.3 GB</span>
  <span class="t" style="left:303.8px;top:236px;font-size:8.1px;letter-spacing:0px;transform:scaleX(0.858);">DVD Drive (D:)</span>
  <span class="t" style="left:303.8px;top:246.2px;font-size:8.1px;letter-spacing:-0.13px;transform:scaleX(0.85);">CCCOMA_X64FRE_EN-US_DV9</span>
  <span class="t" style="left:303.8px;top:256.2px;font-size:8.1px;letter-spacing:0px;transform:scaleX(0.871);">0 bytes free of 4.53 GB</span>
  <span class="t" style="left:8.6px;top:423.1px;font-size:8.1px;letter-spacing:0px;transform:scaleX(0.92);">8 items</span>
</div>
<svg id="wm" viewBox="0 0 700 486">
<g opacity=".5">
<path d="M606.9 436.6A25 25 0 0 1 626.5 412.2L626.5 415.2L630.5 415.2L630.5 418L634.5 418L634.5 420.8L638.5 420.8L638.5 423.6L642.5 423.6L642.5 426.4L646.5 426.4L646.5 429.2L650.5 429.2L650.5 436.6Z" fill="#f0f0f0"/>
<path d="M631.9 412.9A23.7 23.7 0 1 1 608.2 437.4" fill="none" stroke="#f0f0f0" stroke-width="2.6"/>
<rect x="635.5" y="416.2" width="2.6" height="2.2" fill="#f0f0f0"/><rect x="640" y="419.4" width="2.6" height="2.2" fill="#f0f0f0"/><rect x="644.5" y="422.6" width="2.6" height="2.2" fill="#f0f0f0"/>
</g>
<g font-family="'Liberation Sans',sans-serif" font-weight="bold">
<text x="581.1" y="441.6" font-size="17" fill="#3c3c3c" fill-opacity=".55" textLength="76" lengthAdjust="spacingAndGlyphs">PConline</text>
<text x="580.5" y="440.9" font-size="17" fill="#c9c9c9" fill-opacity=".8" textLength="76" lengthAdjust="spacingAndGlyphs">PConline</text>
<text x="657.4" y="441" font-size="6.6" fill="#ccd0d2" fill-opacity=".8" textLength="22.5" lengthAdjust="spacingAndGlyphs">.com.cn</text>
</g>
<rect x="580.5" y="443.2" width="99" height=".7" fill="#d0d0d0" opacity=".45"/>
<g font-family="'Noto Sans CJK SC','WenQuanYi Zen Hei',sans-serif" font-weight="700" font-size="8.8" letter-spacing="1.7">
<text transform="translate(581 454.3) scale(1.57 1)" fill="#3c3c3c" fill-opacity=".55">太平洋电脑网</text>
<text transform="translate(580.5 453.7) scale(1.57 1)" fill="#c9c9c9" fill-opacity=".8">太平洋电脑网</text>
</g>
</svg>
</body>
</html>
